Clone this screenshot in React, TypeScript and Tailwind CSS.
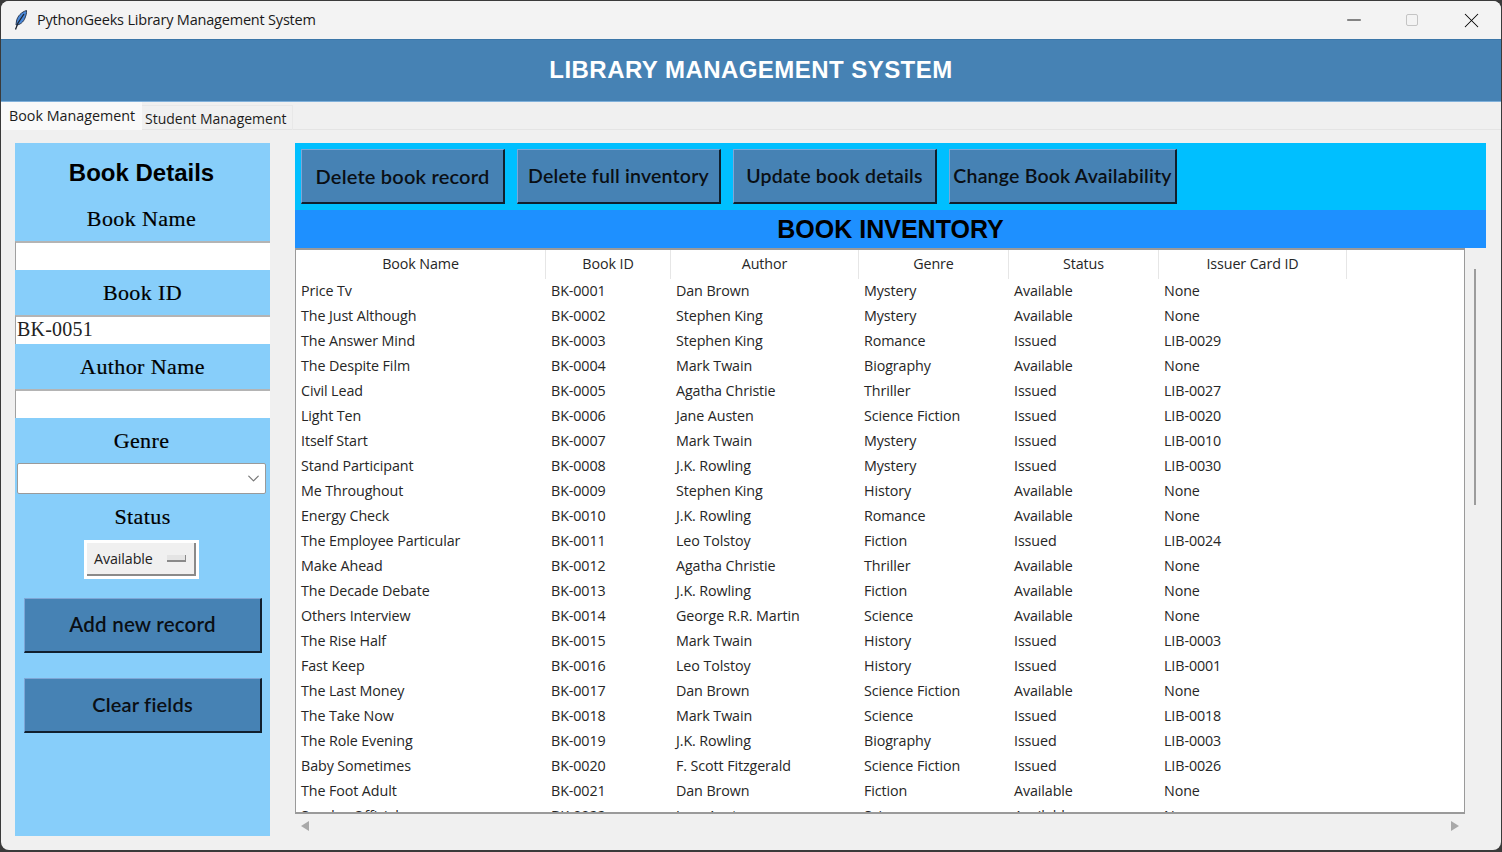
import React from 'react';
import { ChevronDown, Minus, X } from 'lucide-react';

const columns = [
  { label: 'Book Name', width: 'w-[250px]' },
  { label: 'Book ID', width: 'w-[125px]' },
  { label: 'Author', width: 'w-[188px]' },
  { label: 'Genre', width: 'w-[150px]' },
  { label: 'Status', width: 'w-[150px]' },
  { label: 'Issuer Card ID', width: 'w-[188px]' },
];

const books = [
  ['Price Tv', 'BK-0001', 'Dan Brown', 'Mystery', 'Available', 'None'],
  ['The Just Although', 'BK-0002', 'Stephen King', 'Mystery', 'Available', 'None'],
  ['The Answer Mind', 'BK-0003', 'Stephen King', 'Romance', 'Issued', 'LIB-0029'],
  ['The Despite Film', 'BK-0004', 'Mark Twain', 'Biography', 'Available', 'None'],
  ['Civil Lead', 'BK-0005', 'Agatha Christie', 'Thriller', 'Issued', 'LIB-0027'],
  ['Light Ten', 'BK-0006', 'Jane Austen', 'Science Fiction', 'Issued', 'LIB-0020'],
  ['Itself Start', 'BK-0007', 'Mark Twain', 'Mystery', 'Issued', 'LIB-0010'],
  ['Stand Participant', 'BK-0008', 'J.K. Rowling', 'Mystery', 'Issued', 'LIB-0030'],
  ['Me Throughout', 'BK-0009', 'Stephen King', 'History', 'Available', 'None'],
  ['Energy Check', 'BK-0010', 'J.K. Rowling', 'Romance', 'Available', 'None'],
  ['The Employee Particular', 'BK-0011', 'Leo Tolstoy', 'Fiction', 'Issued', 'LIB-0024'],
  ['Make Ahead', 'BK-0012', 'Agatha Christie', 'Thriller', 'Available', 'None'],
  ['The Decade Debate', 'BK-0013', 'J.K. Rowling', 'Fiction', 'Available', 'None'],
  ['Others Interview', 'BK-0014', 'George R.R. Martin', 'Science', 'Available', 'None'],
  ['The Rise Half', 'BK-0015', 'Mark Twain', 'History', 'Issued', 'LIB-0003'],
  ['Fast Keep', 'BK-0016', 'Leo Tolstoy', 'History', 'Issued', 'LIB-0001'],
  ['The Last Money', 'BK-0017', 'Dan Brown', 'Science Fiction', 'Available', 'None'],
  ['The Take Now', 'BK-0018', 'Mark Twain', 'Science', 'Issued', 'LIB-0018'],
  ['The Role Evening', 'BK-0019', 'J.K. Rowling', 'Biography', 'Issued', 'LIB-0003'],
  ['Baby Sometimes', 'BK-0020', 'F. Scott Fitzgerald', 'Science Fiction', 'Issued', 'LIB-0026'],
  ['The Foot Adult', 'BK-0021', 'Dan Brown', 'Fiction', 'Available', 'None'],
  ['Sunday Official', 'BK-0022', 'Jane Austen', 'Science', 'Available', 'None'],
];

const uiFont = "font-['Open_Sans','Noto_Sans',sans-serif]";
const serifFont = "font-['Liberation_Serif',serif]";

const ActionButton = ({ label, className }: { label: string; className: string }) => (
  <button
    className={`flex items-center justify-center whitespace-nowrap bg-[#4682b4] border-t border-l border-t-[#7ea6d6] border-l-[#7ea6d6] border-b-2 border-r-2 border-b-[#10202e] border-r-[#10202e] font-['Lato',sans-serif] font-semibold text-[#0a0f14] tracking-[0.2px] ${className}`}
  >
    {label}
  </button>
);

const FieldLabel = ({ label, className }: { label: string; className: string }) => (
  <div className={`flex items-center justify-center ${serifFont} text-[22px] tracking-[0.4px] [-webkit-text-stroke:0.2px_black] text-black ${className}`}>{label}</div>
);

const Entry = ({ value }: { value?: string }) => (
  <div className={`h-[29px] bg-white border-t-2 border-l border-t-[#b4b4b4] border-l-[#a0a0a0] pl-[1px] ${serifFont} text-[20px] tracking-[0.2px] leading-[25px] text-[#222]`}>
    {value}
  </div>
);

export default function App() {
  return (
    <div className="w-[1502px] h-[852px] bg-[#3a3a3a] overflow-hidden">
      <div className="h-[849px] mx-[1px] mt-[1px] rounded-lg overflow-hidden bg-[#f0f0f0] flex flex-col">
        {/* Title bar */}
        <div className="h-[38px] shrink-0 bg-[#f3f3f3] flex items-center">
          <svg viewBox="0 0 14 20" className="w-[14px] h-[20px] ml-[13px]">
            <path d="M12.5 0.5 C7.5 2 3.5 6 2.5 11 L2 15 C6 15 9.5 12 11 8 C12 5.5 12.8 3 12.5 0.5 Z" fill="#4a88d8" stroke="#2b3a52" strokeWidth="1" />
            <path d="M10 4 L4 13 L1.5 19.5" fill="none" stroke="#1c2430" strokeWidth="1.3" />
          </svg>
          <span className={`ml-[9px] ${uiFont} text-[14.5px] tracking-[-0.2px] text-[#1a1a1a]`}>PythonGeeks Library Management System</span>
          <div className="ml-auto flex items-center">
            <Minus className="w-[22px] h-[22px] text-black mr-[41px]" strokeWidth={1} />
            <div className="w-[12px] h-[12px] rounded-[2px] border border-[#c4c4c4] mr-[41px]" />
            <X className="w-[25px] h-[25px] text-black mr-[17px]" strokeWidth={1} />
          </div>
        </div>

        {/* Header */}
        <div className="h-[63px] shrink-0 pb-[2px] bg-[#4682b4] border-t border-t-[#3b76a8] border-b border-b-[#7fb0da] flex items-center justify-center">
          <h1 className="font-['Liberation_Sans',sans-serif] font-bold text-[24px] tracking-[0.45px] text-white">LIBRARY MANAGEMENT SYSTEM</h1>
        </div>

        {/* Tabs */}
        <div className={`h-[28px] shrink-0 flex border-b border-b-[#e4e4e4] ${uiFont} text-[14.3px] text-[#1c1c1c] whitespace-nowrap`}>
          <div className="w-[141px] h-[28px] bg-[#f9f9f9] pl-[8px] pt-[2px] leading-[24px]">Book Management</div>
          <div className="w-[151px] mt-[3px] h-[25px] border-t border-r border-[#e8e8e8] pl-[3px] leading-[25px] text-[14px]">Student Management</div>
        </div>

        {/* Main */}
        <div className="flex-1 flex pl-[14px] pr-[15px] pt-[13px] pb-[14px] gap-[25px] min-h-0">
          {/* Book details */}
          <aside className="w-[255px] shrink-0 bg-[#87cefa] flex flex-col">
            <div className="h-[60px] pt-[15px] pr-[2px] text-center font-['Liberation_Sans',sans-serif] font-bold text-[24px] leading-[30px] text-black">Book Details</div>
            <FieldLabel label="Book Name" className="h-[38px] pb-[7px] pr-[2px]" />
            <Entry />
            <FieldLabel label="Book ID" className="h-[45px]" />
            <Entry value="BK-0051" />
            <FieldLabel label="Author Name" className="h-[45px]" />
            <Entry />
            <FieldLabel label="Genre" className="h-[45px] pr-[2px]" />
            <div className="mx-[2px] w-[249px] h-[31px] bg-white border border-[#9a9a9a] rounded-[2px] flex items-center justify-end pr-[2px]">
              <ChevronDown className="w-[19px] h-[19px] text-[#777]" strokeWidth={1.5} />
            </div>
            <FieldLabel label="Status" className="h-[45px] pb-[1px]" />
            <div className="ml-[69px] w-[115px] h-[39px] bg-white p-[3px] mt-[1px]">
              <div className={`h-full bg-[#f0f0f0] border-r-2 border-b-2 border-r-[#8a8a8a] border-b-[#8a8a8a] flex items-center pl-[7px] ${uiFont} text-[14.3px] tracking-[-0.1px] text-[#222]`}>
                Available
                <span className="ml-auto mr-[8px] w-[19px] h-[7px] bg-[#e4e4e4] border-b-2 border-r border-[#8a8a8a]" />
              </div>
            </div>
            <ActionButton label="Add new record" className="mt-[19px] mx-[9px] h-[55px] w-[238px] pb-[2px] text-[20.5px]" />
            <ActionButton label="Clear fields" className="mt-[25px] mx-[9px] h-[55px] w-[238px] pb-[2px] text-[20px]" />
          </aside>

          {/* Inventory */}
          <section className="w-[1191px] flex flex-col min-h-0">
            <div className="h-[67px] shrink-0 bg-[#00bfff] flex pt-[6px] pl-[6px] gap-[12px]">
              <ActionButton label="Delete book record" className="w-[204px] h-[55px] text-[20px]" />
              <ActionButton label="Delete full inventory" className="w-[204px] h-[55px] text-[19.5px]" />
              <ActionButton label="Update book details" className="w-[204px] h-[55px] text-[19.5px]" />
              <ActionButton label="Change Book Availability" className="w-[228px] h-[55px] text-[19.5px]" />
            </div>
            <div className="h-[38px] shrink-0 pt-[1px] bg-[#1e90ff] flex items-center justify-center font-['Liberation_Sans',sans-serif] font-bold text-[25px] text-black">
              BOOK INVENTORY
            </div>

            <div className="flex h-[566px] shrink-0">
              {/* Table */}
              <div className={`w-[1170px] h-[566px] bg-white border-t-2 border-l border-r border-b-2 border-t-[#9a9a9a] border-l-[#9a9a9a] border-r-[#9a9a9a] border-b-[#9a9a9a] overflow-hidden ${uiFont} text-[14.3px] tracking-[-0.1px] text-[#262626]`}>
                <div className="flex h-[29px]">
                  {columns.map((col) => (
                    <div key={col.label} className={`${col.width} shrink-0 border-r border-r-[#e6e6e6] text-center leading-[28px]`}>
                      {col.label}
                    </div>
                  ))}
                </div>
                <div className="-mt-[1px]">
                  {books.map((row) => (
                    <div key={row[1]} className="flex h-[25px] leading-[25px]">
                      {row.map((cell, i) => (
                        <div key={i} className={`${columns[i].width} shrink-0 pl-[5px] whitespace-nowrap`}>
                          {cell}
                        </div>
                      ))}
                    </div>
                  ))}
                </div>
              </div>
              {/* Vertical scrollbar */}
              <div className="flex-1 pt-[21px] pl-[9px]">
                <div className="w-[2px] h-[236px] bg-[#9c9c9c]" />
              </div>
            </div>

            {/* Horizontal scrollbar */}
            <div className="w-[1170px] h-[20px] flex items-center justify-between px-[6px] pt-[3px]">
              <span className="w-0 h-0 border-y-[5px] border-y-transparent border-r-[8px] border-r-[#a8a8a8]" />
              <span className="w-0 h-0 border-y-[5px] border-y-transparent border-l-[8px] border-l-[#a8a8a8]" />
            </div>
          </section>
        </div>
      </div>
    </div>
  );
}
